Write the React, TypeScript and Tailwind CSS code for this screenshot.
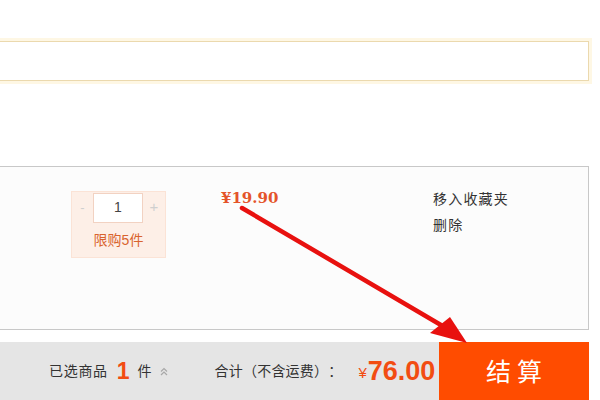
export default function App() {
  return (
    <div className="relative w-[600px] h-[400px] overflow-hidden bg-white text-[#333] font-['Liberation_Sans','Noto_Sans_CJK_SC',sans-serif] [text-spacing-trim:space-all]">
      {/* notice strip */}
      <div className="pt-[41px]">
        <div className="h-[40px] w-[589px] border border-l-0 border-[#ebd9ae] bg-white shadow-[0_0_0_3px_#fef7e4]" />
      </div>

      {/* cart item */}
      <div className="mt-[85px] h-[164px] w-[589px] border border-l-0 border-[#c8c8c8] bg-[#fcfcfc]">
        <div className="flex pt-[24px]">
          <div className="ml-[71px] flex h-[67px] w-[95px] flex-col bg-[#fdefe7] border border-[#fbe3d6]">
            <div className="flex h-[31px] items-center">
              <span className="w-[21px] text-center text-[13px] text-[#cfcfcf]">-</span>
              <div className="flex h-[30px] w-[50px] items-center justify-center border border-[#f2d2c2] bg-white text-[14px] text-[#444]">
                1
              </div>
              <span className="flex-1 text-center text-[15px] text-[#cfcfcf]">+</span>
            </div>
            <div className="flex flex-1 items-center justify-center text-[14px] text-[#d9632e]">
              限购5件
            </div>
          </div>
          <div className="ml-[55px] w-[212px] -mt-[1px] text-[15px] font-bold leading-[16px] text-[#e4542a] font-['DejaVu_Serif',serif]">
            ¥19.90
          </div>
          <div className="flex flex-col gap-[9px] text-[14px] leading-[17px] tracking-[1.2px] text-[#333]">
            <span>移入收藏夹</span>
            <span>删除</span>
          </div>
        </div>
      </div>

      {/* settle bar */}
      <div className="mt-[12px] flex h-[58px] w-[589px]">
        <div className="flex flex-1 items-center bg-[#e5e5e5] text-[14px] text-[#333]">
          <span className="ml-[49px] tracking-[0.7px]">已选商品</span>
          <span className="ml-[9px] text-[23px] font-bold leading-none text-[#f24c12]">1</span>
          <span className="ml-[8px]">件</span>
          <svg className="ml-[8px]" width="8" height="9" viewBox="0 0 8 9" fill="none" stroke="#a8a8a8" strokeWidth="1.2">
            <path d="M1 4.5 L4 1.5 L7 4.5" />
            <path d="M1 8 L4 5 L7 8" />
          </svg>
          <span className="ml-[47px] tracking-[0.2px]">合计（不含运费）：</span>
          <span className="ml-[16px] mt-[5px] text-[15px] text-[#f24c12]">¥</span>
          <span className="ml-[1px] text-[27px] font-bold leading-none text-[#f24c12]">76.00</span>
        </div>
        <div className="flex w-[150px] items-center justify-center bg-[#ff4c00] text-[25px] tracking-[6px] text-white font-['Noto_Sans_CJK_SC',sans-serif]">
          <span className="pl-[6px]">结算</span>
        </div>
      </div>

      {/* annotation arrow */}
      <svg className="absolute left-0 top-0 pointer-events-none" width="600" height="400" viewBox="0 0 600 400">
        <line x1="242" y1="208" x2="446" y2="328" stroke="#e8110f" strokeWidth="4.5" strokeLinecap="round" />
        <polygon points="467,343 430,333 450,317" fill="#e8110f" />
      </svg>
    </div>
  )
}
